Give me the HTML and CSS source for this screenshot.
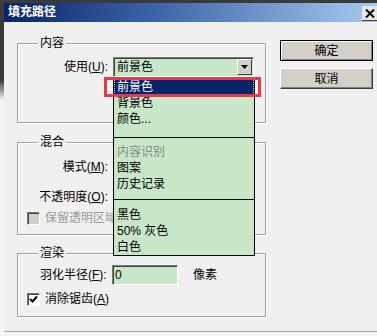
FILE: index.html
```html
<!DOCTYPE html>
<html lang="zh-CN">
<head>
    <meta charset="UTF-8">
    <meta name="viewport" content="width=device-width, initial-scale=1.0">
    <title>填充路径</title>
    <link rel="stylesheet" href="styles.css">
</head>
<body>
<div class="screen">
    <div class="window">
        <div class="titlebar">
            <span class="title">填充路径</span>
            <span class="close">
                <svg width="10" height="9" viewBox="0 0 10 9"><path d="M1 0.5 L9 8.5 M9 0.5 L1 8.5" stroke="#000" stroke-width="2"/></svg>
            </span>
        </div>
        <div class="dialog">
            <div class="groups">
                <fieldset class="group group-content">
                    <legend>内容</legend>
                    <div class="field">
                        <label class="field-label">使用(<u>U</u>):</label>
                        <div class="combo">
                            <span class="combo-text">前景色</span>
                            <span class="combo-btn"><svg width="7" height="4" viewBox="0 0 7 4"><path d="M0 0 H7 L3.5 4 Z" fill="#000"/></svg></span>
                        </div>
                    </div>
                </fieldset>

                <fieldset class="group group-blend">
                    <legend>混合</legend>
                    <div class="field">
                        <label class="field-label">模式(<u>M</u>):</label>
                        <div class="combo">
                            <span class="combo-text">正常</span>
                            <span class="combo-btn"><svg width="7" height="4" viewBox="0 0 7 4"><path d="M0 0 H7 L3.5 4 Z" fill="#000"/></svg></span>
                        </div>
                    </div>
                    <div class="field field-opacity">
                        <label class="field-label">不透明度(<u>O</u>):</label>
                        <div class="textbox textbox-short">100</div>
                    </div>
                    <div class="check-row disabled">
                        <span class="checkbox"></span>
                        <span>保留透明区域</span>
                    </div>
                </fieldset>

                <fieldset class="group group-render">
                    <legend>渲染</legend>
                    <div class="field field-feather">
                        <label class="feather-label">羽化半径(<u>F</u>):</label>
                        <div class="textbox">0</div>
                        <span class="unit">像素</span>
                    </div>
                    <div class="check-row">
                        <span class="checkbox checked">
                            <svg width="9" height="9" viewBox="0 0 9 9"><path d="M1 4 L3.5 6.5 L8 1.5" fill="none" stroke="#000" stroke-width="2"/></svg>
                        </span>
                        <span>消除锯齿(<u>A</u>)</span>
                    </div>
                </fieldset>
            </div>

            <div class="actions">
                <button class="btn btn-default">确定</button>
                <button class="btn">取消</button>
            </div>

            <ul class="dropdown">
                <li class="dropdown-section section-first">
                    <div class="item selected">前景色</div>
                    <div class="item">背景色</div>
                    <div class="item">颜色...</div>
                </li>
                <li class="dropdown-section section-middle">
                    <div class="item muted">内容识别</div>
                    <div class="item">图案</div>
                    <div class="item">历史记录</div>
                </li>
                <li class="dropdown-section section-last">
                    <div class="item">黑色</div>
                    <div class="item">50% 灰色</div>
                    <div class="item">白色</div>
                </li>
            </ul>
            <div class="callout"></div>
        </div>
    </div>
</div>
</body>
</html>
```

FILE: styles.css
```css
body {
    margin: 0;
    font-family: "Liberation Sans", "Noto Sans CJK SC", sans-serif;
    font-size: 12px;
    line-height: 16px;
    color: #000;
}

.screen {
    width: 377px;
    height: 336px;
    overflow: hidden;
    box-sizing: border-box;
    padding: 3px 0 0 4px;
    background: linear-gradient(#3a3a3a 0, #3a3a3a 80px, #f4f4f4 100px);
}

.window {
    width: 373px;
    height: 328px;
    display: flex;
    flex-direction: column;
    border-bottom: 1px solid #a8a8a8;
}

.titlebar {
    height: 19px;
    flex: none;
    display: flex;
    justify-content: space-between;
    padding-left: 4px;
    background: linear-gradient(to right, #0a246a, #3a64a8 40%, #a6caf0);
    color: #fff;
}

.title {
    font-weight: bold;
    line-height: 19px;
}

.close {
    align-self: flex-end;
    margin-bottom: 1px;
    width: 15px;
    height: 15px;
    display: flex;
    align-items: center;
    justify-content: center;
    background: #e6e6e6;
    border-bottom: 1px solid #404040;
    box-sizing: border-box;
}

.dialog {
    flex: 1;
    position: relative;
    display: flex;
    align-items: flex-start;
    padding: 14px 0 0 13px;
    background: #f0f0f0;
}

.groups {
    width: 249px;
    display: flex;
    flex-direction: column;
}

.group {
    margin: 0;
    padding: 0 9px;
    min-width: 0;
    border: 1px solid #a0a0a0;
    box-shadow: 1px 1px 0 #fff, inset 1px 1px 0 #fff;
}

.group legend {
    margin-left: 11px;
    padding: 0 2px;
    line-height: 14px;
    background: #f0f0f0;
}

.group-content {
    padding-top: 7px;
    padding-bottom: 45px;
}

.group-blend {
    margin-top: 12px;
    padding-top: 8px;
    padding-bottom: 9px;
}

.group-render {
    margin-top: 11px;
    padding-top: 5px;
    padding-bottom: 10px;
}

.field {
    display: flex;
    align-items: center;
    height: 20px;
}

.field-opacity {
    margin-top: 10px;
}

.field-label {
    width: 81px;
    margin-right: 5px;
    text-align: right;
    white-space: nowrap;
}

.combo {
    width: 141px;
    height: 20px;
    box-sizing: border-box;
    display: flex;
    align-items: center;
    justify-content: space-between;
    padding: 0 1px 0 3px;
    background: #c8e6c8;
    border: 1px solid;
    border-color: #7a7a7a #fff #fff #7a7a7a;
    box-shadow: inset 1px 1px 0 #404040;
}

.combo-btn {
    width: 15px;
    height: 16px;
    box-sizing: border-box;
    display: flex;
    align-items: center;
    justify-content: center;
    background: #d4d0c8;
    border: 1px solid;
    border-color: #fff #404040 #404040 #fff;
}

.textbox {
    width: 66px;
    height: 20px;
    box-sizing: border-box;
    padding-left: 2px;
    line-height: 18px;
    background: #c8e6c8;
    border: 1px solid;
    border-color: #7a7a7a #fff #fff #7a7a7a;
    box-shadow: inset 1px 1px 0 #404040;
}

.textbox-short {
    width: 50px;
}

.field-feather {
    margin-left: 13px;
}

.feather-label {
    width: 72px;
    white-space: nowrap;
}

.unit {
    margin-left: 15px;
}

.check-row {
    display: flex;
    align-items: center;
    gap: 5px;
    height: 14px;
    margin-top: 4px;
    white-space: nowrap;
}

.group-render .check-row {
    margin-top: 7px;
}

.checkbox {
    width: 13px;
    height: 13px;
    flex: none;
    box-sizing: border-box;
    display: flex;
    align-items: center;
    justify-content: center;
    background: #fff;
    border: 1px solid;
    border-color: #7a7a7a #fff #fff #7a7a7a;
    box-shadow: inset 1px 1px 0 #404040;
}

.check-row.disabled {
    color: #9a9a9a;
}

.check-row.disabled .checkbox {
    background: #d4d0c8;
}

.actions {
    margin-left: 14px;
    padding-top: 4px;
    display: flex;
    flex-direction: column;
    gap: 7px;
}

.btn {
    width: 93px;
    height: 21px;
    padding: 0;
    font: inherit;
    color: #000;
    background: #d4d0c8;
    border: 1px solid;
    border-color: #fff #404040 #404040 #fff;
    box-shadow: inset -1px -1px 0 #808080;
}

.btn-default {
    border-color: #000;
    box-shadow: inset 1px 1px 0 #fff, inset -1px -1px 0 #808080;
}

.dropdown {
    position: absolute;
    left: 109px;
    top: 56px;
    width: 142px;
    box-sizing: border-box;
    margin: 0;
    padding: 0;
    list-style: none;
    background: #c8e6c8;
    border: 1px solid #000;
}

.section-first {
    padding-bottom: 10px;
}

.section-middle {
    border-top: 1px solid #000;
    padding: 6px 0 7px;
}

.section-last {
    border-top: 1px solid #000;
    padding-top: 7px;
}

.item {
    height: 16px;
    padding-left: 3px;
    white-space: nowrap;
}

.item.selected {
    background: #0a246a;
    color: #fff;
    outline: 1px dotted #d8d8a0;
    outline-offset: -1px;
}

.item.muted {
    color: #8a8a8a;
}

.callout {
    position: absolute;
    left: 100px;
    top: 55px;
    width: 157px;
    height: 20px;
    box-sizing: border-box;
    border: 3px solid #e23b4e;
}
```
